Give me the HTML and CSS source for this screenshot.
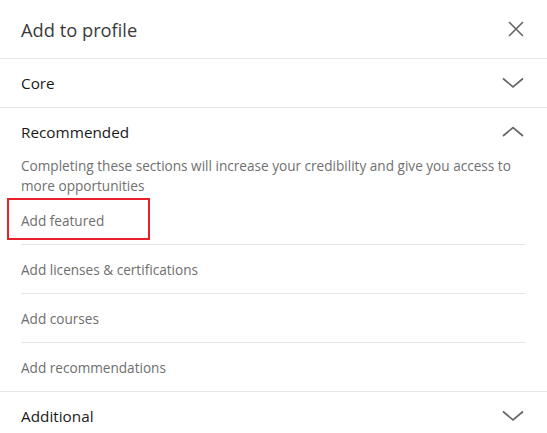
FILE: index.html
```html
<!DOCTYPE html>
<html lang="en">
<head>
    <meta charset="UTF-8">
    <meta name="viewport" content="width=device-width, initial-scale=1.0">
    <link rel="stylesheet" href="styles.css">
</head>
<body>
    <div class="modal">
        <div class="modal-header">
            <h1>Add to profile</h1>
            <button class="close" aria-label="Dismiss">
                <svg width="16" height="16" viewBox="0 0 16 16">
                    <path d="M1 1 L15 15 M15 1 L1 15" stroke="#666" stroke-width="1.6" fill="none"/>
                </svg>
            </button>
        </div>

        <div class="section">
            <div class="section-head">
                <h2>Core</h2>
                <svg class="chevron" width="24" height="24" viewBox="0 0 24 24">
                    <path d="M2 7.5 L12 16 L22 7.5" stroke="#666" stroke-width="1.7" fill="none"/>
                </svg>
            </div>
        </div>

        <div class="section">
            <div class="section-head">
                <h2>Recommended</h2>
                <svg class="chevron" width="24" height="24" viewBox="0 0 24 24">
                    <path d="M2 16 L12 7.5 L22 16" stroke="#666" stroke-width="1.7" fill="none"/>
                </svg>
            </div>
            <p class="desc">Completing these sections will increase your credibility and give you access to more opportunities</p>
            <ul class="items">
                <li class="highlight">Add featured</li>
                <li>Add licenses &amp; certifications</li>
                <li>Add courses</li>
                <li>Add recommendations</li>
            </ul>
        </div>

        <div class="section">
            <div class="section-head">
                <h2>Additional</h2>
                <svg class="chevron" width="24" height="24" viewBox="0 0 24 24">
                    <path d="M2 7.5 L12 16 L22 7.5" stroke="#666" stroke-width="1.7" fill="none"/>
                </svg>
            </div>
        </div>
    </div>
</body>
</html>
```

FILE: styles.css
```css
body {
    margin: 0;
    padding: 0;
    background-color: #fff;
    font-family: "Open Sans", "Noto Sans", sans-serif;
    color: #666;
}

.modal {
    width: 547px;
}

.modal-header {
    height: 58px;
    display: flex;
    align-items: center;
    justify-content: space-between;
    padding: 0 23px 0 21px;
    border-bottom: 1px solid #e6e6e6;
}

.modal-header h1 {
    margin: 0;
    font-size: 18.3px;
    font-weight: 400;
    color: #3a3a3a;
}

.close {
    border: none;
    background: none;
    padding: 0;
    display: flex;
    cursor: pointer;
}

.section {
    border-bottom: 1px solid #e6e6e6;
}

.section-head {
    height: 48px;
    display: flex;
    align-items: center;
    justify-content: space-between;
    padding: 0 22px 0 21px;
}

.section-head h2 {
    margin: 0;
    font-size: 15.3px;
    font-weight: 400;
    color: #1a1a1a;
}

.chevron {
    display: block;
}

.desc {
    margin: 0;
    padding: 0 21px;
    font-size: 13.6px;
    line-height: 20px;
    color: #707070;
}

.items {
    list-style: none;
    margin: 0;
    padding: 0 22px 0 21px;
}

.items li {
    height: 48px;
    line-height: 50px;
    font-size: 13.6px;
    color: #6e6e6e;
    border-bottom: 1px solid #e6e6e6;
}

.items li:last-child {
    border-bottom: none;
}

.items li.highlight {
    position: relative;
}

/* annotation box drawn over the first item */
.items li.highlight::after {
    content: "";
    position: absolute;
    left: -14px;
    top: 2px;
    width: 143px;
    height: 42px;
    border: 2.5px solid #e8202a;
    box-sizing: border-box;
}
```
